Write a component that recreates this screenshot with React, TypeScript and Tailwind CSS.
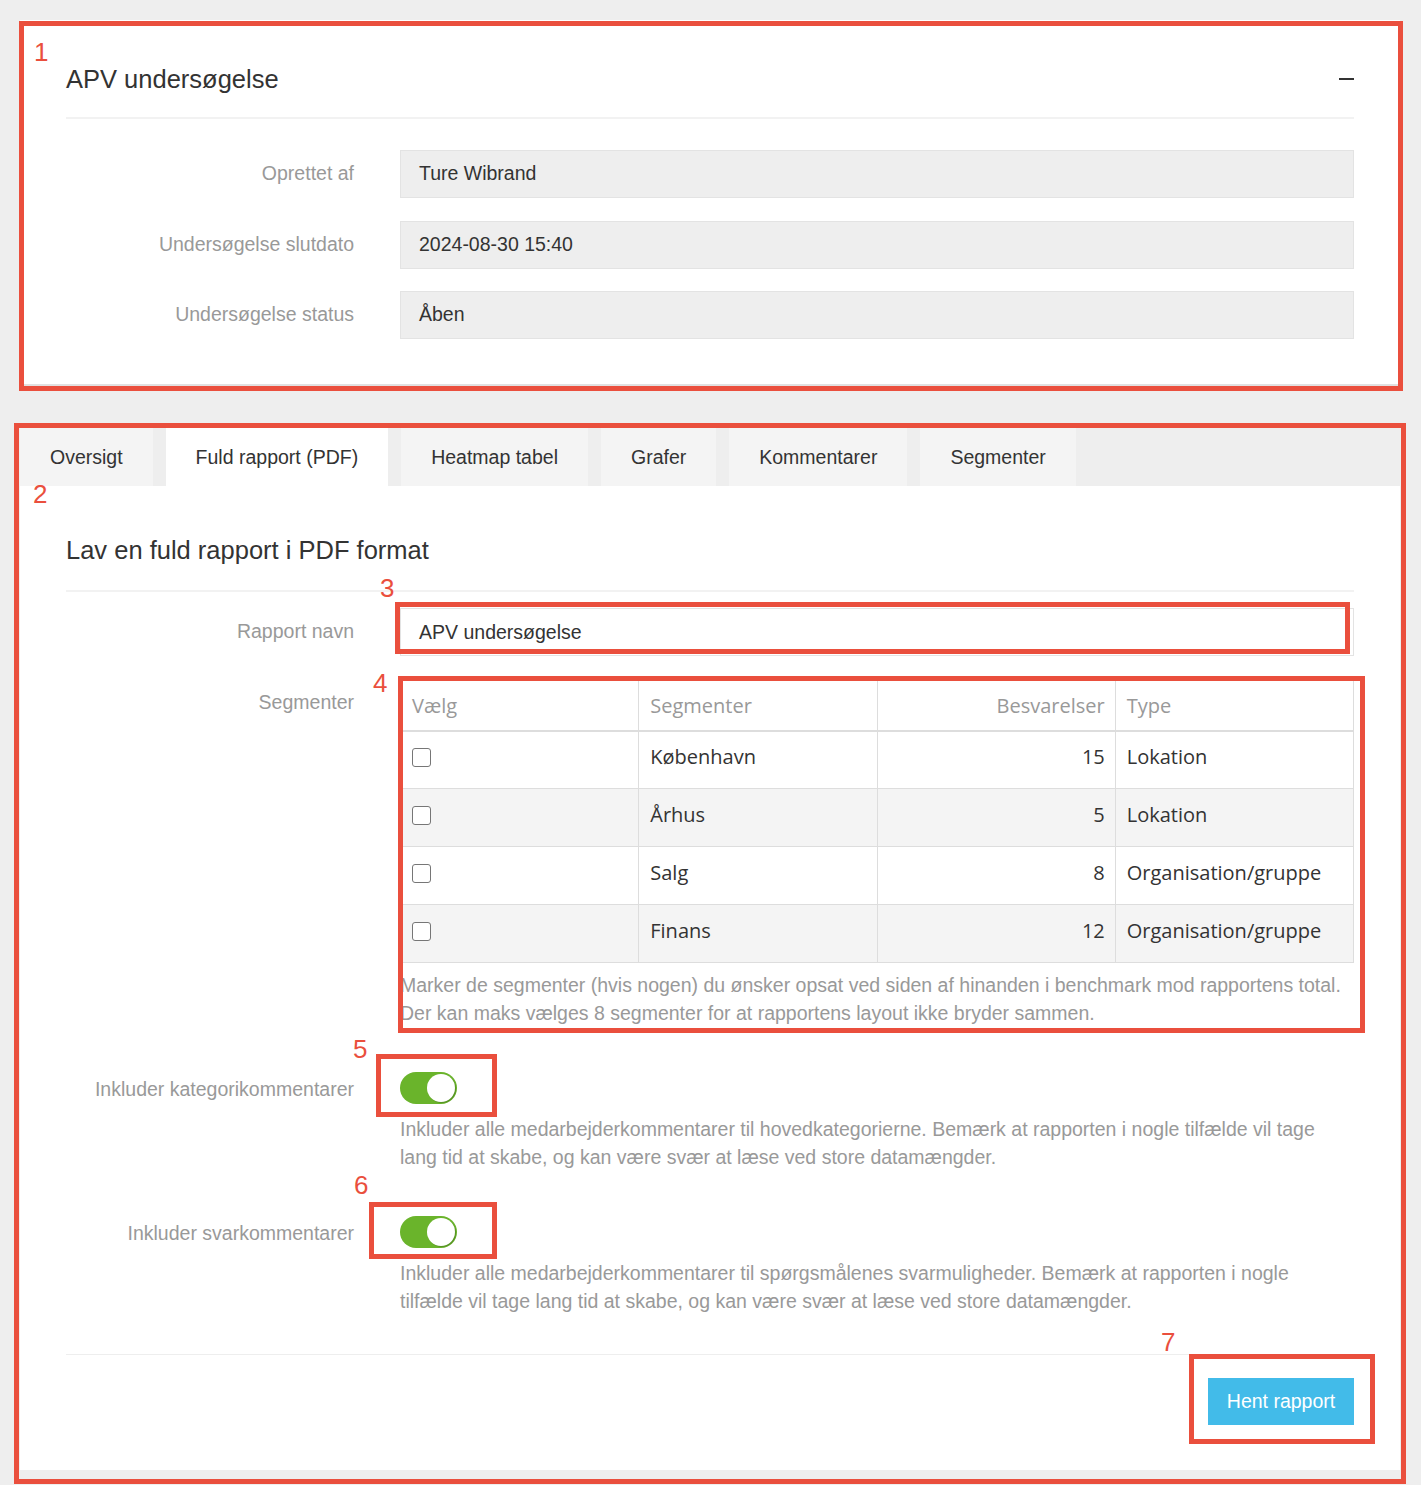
import React from 'react';

type Segment = { navn: string; antal: number; type: string };

const SEGMENTS: Segment[] = [
  { navn: 'København', antal: 15, type: 'Lokation' },
  { navn: 'Århus', antal: 5, type: 'Lokation' },
  { navn: 'Salg', antal: 8, type: 'Organisation/gruppe' },
  { navn: 'Finans', antal: 12, type: 'Organisation/gruppe' },
];

const TABS = ['Oversigt', 'Fuld rapport (PDF)', 'Heatmap tabel', 'Grafer', 'Kommentarer', 'Segmenter'];

function ReadonlyRow({ label, value }: { label: string; value: string }) {
  return (
    <div className="grid grid-cols-[288px_1fr] gap-x-[46px] items-center">
      <span className="text-right text-[#999] text-[19.5px]">{label}</span>
      <div className="h-[48px] flex items-center px-[18px] bg-[#eeeeee] border border-[#e3e3e3] text-[#333] text-[19.5px]">
        {value}
      </div>
    </div>
  );
}

function Toggle() {
  return (
    <div className="w-[57px] h-[32px] rounded-full bg-[#6ab42b] p-[2px] flex justify-end items-center">
      <span className="w-[28px] h-[28px] rounded-full bg-white shadow-[1px_1px_1px_rgba(0,0,0,0.2)]" />
    </div>
  );
}

// red annotation frames drawn over the screenshot
function Frame({ className }: { className: string }) {
  return <div className={`absolute border-[5px] border-[#ea4f3d] pointer-events-none ${className}`} />;
}

function Num({ n, className }: { n: string; className: string }) {
  return (
    <span className={`absolute text-[26px] leading-[26px] text-[#ea4f3d] pointer-events-none ${className}`}>{n}</span>
  );
}

export default function App() {
  return (
    <div className="relative min-h-[1485px] bg-[#eeeeee] pt-[20px] pl-[20px] pr-[21px] font-['Liberation_Sans',Arial,sans-serif]">
      {/* Undersøgelse info */}
      <section className="bg-white px-[46px] pt-[45px] pb-[45px] shadow-[0_2px_1px_rgba(0,0,0,0.05)]">
        <div className="flex items-center justify-between">
          <h2 className="text-[25.5px] leading-[28px] text-[#333]">APV undersøgelse</h2>
          <span className="w-[15px] h-[2px] bg-[#333]" />
        </div>
        <div className="mt-[24px] h-[2px] bg-[#f2f2f2]" />
        <div className="mt-[31px] flex flex-col gap-[22.5px]">
          <ReadonlyRow label="Oprettet af" value="Ture Wibrand" />
          <ReadonlyRow label="Undersøgelse slutdato" value="2024-08-30 15:40" />
          <ReadonlyRow label="Undersøgelse status" value="Åben" />
        </div>
      </section>

      {/* Rapport faneblade */}
      <section className="mt-[44px]">
        <div className="flex gap-[13px] h-[58px]">
          {TABS.map((t, i) => (
            <div
              key={t}
              className={`px-[30px] pt-[2px] flex items-center text-[19.5px] text-[#333] ${i === 1 ? 'bg-white' : 'bg-[#f4f4f4]'}`}
            >
              {t}
            </div>
          ))}
        </div>

        <div className="bg-white px-[46px] pt-[50px] pb-[45px]">
          <h2 className="text-[25.5px] leading-[28px] text-[#333]">Lav en fuld rapport i PDF format</h2>
          <div className="mt-[26px] h-[2px] bg-[#f2f2f2]" />

          <div className="mt-[16px] grid grid-cols-[288px_1fr] gap-x-[46px] items-center">
            <span className="text-right text-[#999] text-[19.5px]">Rapport navn</span>
            <div className="h-[48px] flex items-center px-[18px] pt-[2px] bg-white border border-[#e3e3e3] text-[#333] text-[19.5px]">
              APV undersøgelse
            </div>
          </div>

          <div className="mt-[24px] grid grid-cols-[288px_1fr] gap-x-[46px] items-start">
            <span className="text-right text-[#999] text-[19.5px] pt-[8px] leading-[28px]">Segmenter</span>
            <div>
              <table className="w-full table-fixed border-collapse font-['Open_Sans',sans-serif] text-[20px]">
                <thead>
                  <tr className="h-[50px] text-[#999]">
                    <th className="font-normal text-left px-[11px] pt-[2px] border border-[#ddd] border-b-2">Vælg</th>
                    <th className="font-normal text-left px-[11px] pt-[2px] border border-[#ddd] border-b-2">Segmenter</th>
                    <th className="font-normal text-right px-[10px] pt-[2px] border border-[#ddd] border-b-2">Besvarelser</th>
                    <th className="font-normal text-left px-[11px] pt-[2px] border border-[#ddd] border-b-2">Type</th>
                  </tr>
                </thead>
                <tbody className="text-[#333]">
                  {SEGMENTS.map((s, i) => (
                    <tr key={s.navn} className={`h-[58px] ${i % 2 === 1 ? 'bg-[#f4f4f4]' : 'bg-white'}`}>
                      <td className="px-[11px] pb-[4px] border border-[#ddd]">
                        <input
                          type="checkbox"
                          readOnly
                          className="appearance-none block w-[19px] h-[19px] border-[1.5px] border-[#767676] rounded-[3px] bg-white"
                        />
                      </td>
                      <td className="px-[11px] pb-[5px] border border-[#ddd]">{s.navn}</td>
                      <td className="px-[10px] pb-[5px] border border-[#ddd] text-right">{s.antal}</td>
                      <td className="px-[11px] pb-[5px] border border-[#ddd]">{s.type}</td>
                    </tr>
                  ))}
                </tbody>
              </table>
              <p className="mt-[8px] text-[19.5px] leading-[28px] text-[#999]">
                Marker de segmenter (hvis nogen) du ønsker opsat ved siden af hinanden i benchmark mod rapportens total.
                <br />
                Der kan maks vælges 8 segmenter for at rapportens layout ikke bryder sammen.
              </p>
            </div>
          </div>

          <div className="mt-[45px] grid grid-cols-[288px_1fr] gap-x-[46px]">
            <span className="text-right text-[#999] text-[19.5px] h-[32px] pt-[4px] flex items-center justify-end">
              Inkluder kategorikommentarer
            </span>
            <div>
              <Toggle />
              <p className="mt-[11px] text-[19.5px] leading-[28px] text-[#999]">
                Inkluder alle medarbejderkommentarer til hovedkategorierne. Bemærk at rapporten i nogle tilfælde vil tage
                <br />
                lang tid at skabe, og kan være svær at læse ved store datamængder.
              </p>
            </div>
          </div>

          <div className="mt-[45px] grid grid-cols-[288px_1fr] gap-x-[46px]">
            <span className="text-right text-[#999] text-[19.5px] h-[32px] pt-[4px] flex items-center justify-end">
              Inkluder svarkommentarer
            </span>
            <div>
              <Toggle />
              <p className="mt-[11px] text-[19.5px] leading-[28px] text-[#999]">
                Inkluder alle medarbejderkommentarer til spørgsmålenes svarmuligheder. Bemærk at rapporten i nogle
                <br />
                tilfælde vil tage lang tid at skabe, og kan være svær at læse ved store datamængder.
              </p>
            </div>
          </div>

          <div className="mt-[39px] h-px bg-[#eeeeee]" />
          <div className="mt-[23px] flex justify-end">
            <button className="h-[47px] w-[146px] bg-[#42bbe9] text-white text-[19.5px]">Hent rapport</button>
          </div>
        </div>
      </section>

      {/* annoteringer */}
      <Frame className="left-[19px] top-[21px] w-[1384px] h-[370px]" />
      <Frame className="left-[14px] top-[423px] w-[1392px] h-[1061px]" />
      <Frame className="left-[395px] top-[602px] w-[955px] h-[52px]" />
      <Frame className="left-[398px] top-[676px] w-[967px] h-[357px]" />
      <Frame className="left-[376px] top-[1054px] w-[121px] h-[63px]" />
      <Frame className="left-[369px] top-[1202px] w-[128px] h-[57px]" />
      <Frame className="left-[1189px] top-[1354px] w-[186px] h-[90px]" />

      <Num n="1" className="left-[34px] top-[38.5px]" />
      <Num n="2" className="left-[33px] top-[480.5px]" />
      <Num n="3" className="left-[380px] top-[574.5px]" />
      <Num n="4" className="left-[373px] top-[669.5px]" />
      <Num n="5" className="left-[353px] top-[1035.5px]" />
      <Num n="6" className="left-[354px] top-[1171.5px]" />
      <Num n="7" className="left-[1161px] top-[1328.5px]" />
    </div>
  );
}
